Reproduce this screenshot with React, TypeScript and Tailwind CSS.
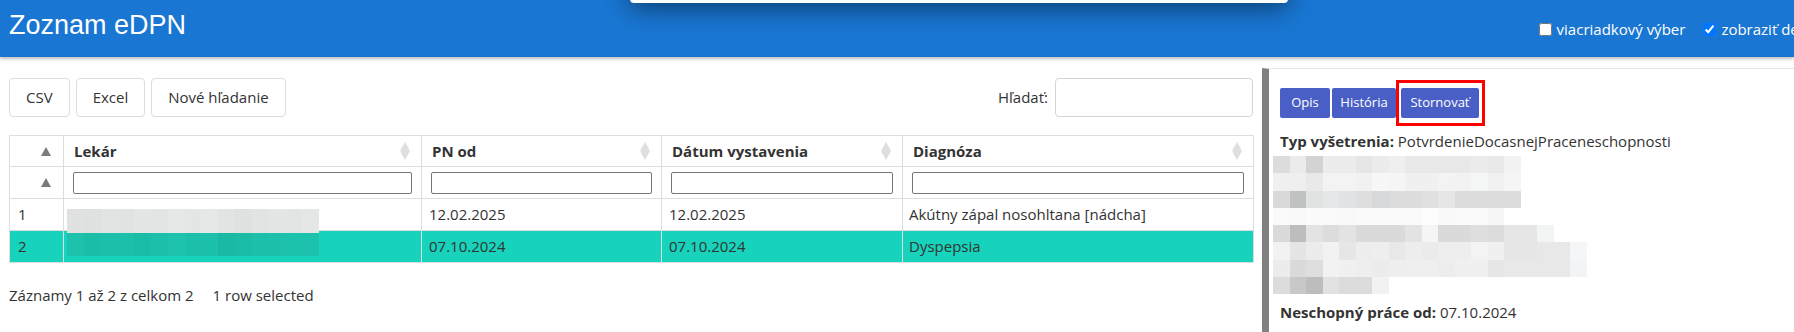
import React from "react";

const rightRows: { w: number; c: string[] }[] = [
  { w: 15, c: ["#dcdcdc","#ebebeb","#d3d3d3","#ececec","#ececec","#e6e6e6","#ececec","#efefef","#e8e8e8","#e8e8e8","#e8e8e8","#e8e8e8","#ececec","#e9e9e9","#f2f2f2"] },
  { w: 15, c: ["#f0f0f0","#efefef","#e8eaea","#f3f3f3","#f3f3f3","#f1f1f1","#f7f7f7","#f5f5f5","#f0f0f0","#f0f0f0","#f3f3f3","#f2f2f2","#f5f6f6","#f1f1f1","#f5f5f5"] },
  { w: 15, c: ["#d9d9d9","#c0c2c2","#e1e3e3","#e6e7e8","#e1e2e3","#dedede","#d8d9dc","#dcdcdc","#dcdcdc","#e0e0e0","#e6e6e6","#dcdcdc","#dcdcdc","#dcdcdc","#dcdcdc"] },
  { w: 14, c: ["#fafafa","#f9f9f9","#fbfbfb","#fafafa","#f9f9f9","#fafafa","#fafafa","#fbfbfb","#fafafa","#fdfdfd","#f9f9f9","#fafafa","#fafafa","#f7f7f7"] },
  { w: 17, c: ["#dadada","#bdbdbd","#e3e3e3","#dcdcdc","#e3e3e3","#dadada","#dadada","#dadada","#e3e3e3","#f5f5f5","#dadada","#dadada","#dedede","#dcdcdc","#e6e6e6","#e6e6e6","#f3f5f5"] },
  { w: 19, c: ["#f2f2f2","#e5e5e5","#ececec","#f2f2f2","#e6e6e6","#ededed","#eeeeee","#e8e8e8","#ededed","#ebebeb","#eeeeee","#eeeeee","#f3f3f3","#f0f0f0","#e6e6e6","#e6e6e6","#e8e8e8","#e8e8e8","#f5f6f7"] },
  { w: 19, c: ["#ececec","#dadada","#dedede","#f2f2f2","#f0f0f0","#eeeeee","#ececec","#eeeeee","#efefef","#efefef","#ededed","#f0f0f0","#f0f0f0","#e6e6e6","#e8e8e8","#e8e8e8","#e8e8e8","#e8e8e8","#f3f4f6"] },
  { w: 7, c: ["#dcdcdc","#c8c8c8","#bdbdbd","#e2e2e2","#dcdcdc","#dcdcdc","#f2f2f2"] },
];

const tableBlur1 = ["#e0e1e1","#dfe0e0","#e2e3e3","#e1e2e2","#e4e5e5","#e3e4e4","#e6e7e7","#e4e5e5","#e6e8e8","#e2e4e4","#dfe0e0","#e2e4e4","#e4e6e6","#e3e5e5","#e5e6e6"];
const tableBlur2 = ["#1dc2ac","#1bbda7","#1cbfa9","#1cbfa9","#1bbca6","#1cbfa9","#1dc3ad","#1cbfa9","#1dc1ab","#1ab9a4","#1bbca6","#1cbfa9","#1dc1ab","#1dc2ac","#1dc2ac"];

function SortBoth() {
  return (
    <svg width="10" height="18" viewBox="0 0 10 18" className="shrink-0">
      <path d="M5 0 L9.5 8 L9.5 10 L5 18 L0.5 10 L0.5 8 Z" fill="#dedede" />
    </svg>
  );
}

function HeadCell({ label }: { label: string }) {
  return (
    <th className="border border-[#dddddd] h-[31px] pl-[10px] pr-[11px] text-left align-middle">
      <div className="flex items-center justify-between">
        <span className="font-bold text-[15px] text-[#333333]">{label}</span>
        <SortBoth />
      </div>
    </th>
  );
}

function FilterCell() {
  return (
    <td className="border border-[#dddddd] h-[32px] px-[9px] align-middle">
      <div className="h-[22px] border border-[#767676] rounded-[2px] bg-white" />
    </td>
  );
}

function Tri() {
  return (
    <svg width="10" height="9" viewBox="0 0 10 9">
      <path d="M5 0 L10 9 L0 9 Z" fill="#7a7a7a" />
    </svg>
  );
}

export default function App() {
  return (
    <div className="relative w-[1794px] h-[332px] overflow-hidden bg-white font-['Open_Sans',sans-serif] text-[#333333]">
      {/* header */}
      <div className="relative h-[57px] bg-[#1976d2] shadow-[0_2px_3px_rgba(0,0,0,0.25)] flex items-center justify-between z-10">
        <div className="pl-[9px] pb-[6px] text-white text-[27px] font-['Liberation_Sans',Arial,sans-serif] leading-none">
          Zoznam eDPN
        </div>
        <div className="flex items-center whitespace-nowrap text-white text-[15px] mr-[-26px] pt-[1px]">
          <label className="flex items-center gap-[5px]">
            <input type="checkbox" className="w-[13px] h-[13px] m-0" readOnly />
            <span>viacriadkový výber</span>
          </label>
          <label className="flex items-center gap-[5px] ml-[18px]">
            <input type="checkbox" className="w-[13px] h-[13px] m-0" defaultChecked />
            <span>zobraziť detail</span>
          </label>
        </div>
        {/* popup at the top edge */}
        <div className="absolute left-[630px] top-[-40px] w-[658px] h-[43px] bg-white rounded-[4px] shadow-[0_6px_24px_rgba(0,0,0,0.45)]" />
      </div>

      <div className="flex">
        {/* left part */}
        <div className="w-[1262px] pl-[9px] pr-[9px] pt-[21px]">
          <div className="flex items-center justify-between">
            <div className="flex gap-[6px]">
              {["CSV", "Excel", "Nové hľadanie"].map((t) => (
                <button
                  key={t}
                  className="h-[39px] px-[16px] border border-[#dddddd] rounded-[4px] bg-white text-[15px] text-[#333333]"
                >
                  {t}
                </button>
              ))}
            </div>
            <div className="flex items-center gap-[7px]">
              <span className="text-[15px] text-[#333333]">Hľadať:</span>
              <div className="w-[198px] h-[39px] border border-[#d5d5d5] rounded-[4px]" />
            </div>
          </div>

          <table className="mt-[18px] w-[1244px] table-fixed border-collapse border border-[#dddddd] text-[15px]">
            <colgroup>
              <col className="w-[54px]" />
              <col className="w-[358px]" />
              <col className="w-[240px]" />
              <col className="w-[241px]" />
              <col className="w-[351px]" />
            </colgroup>
            <thead>
              <tr>
                <th className="border border-[#dddddd] h-[31px] pr-[12px] align-middle">
                  <div className="flex justify-end"><Tri /></div>
                </th>
                <HeadCell label="Lekár" />
                <HeadCell label="PN od" />
                <HeadCell label="Dátum vystavenia" />
                <HeadCell label="Diagnóza" />
              </tr>
              <tr>
                <td className="border border-[#dddddd] h-[32px] pr-[12px] align-middle">
                  <div className="flex justify-end"><Tri /></div>
                </td>
                <FilterCell />
                <FilterCell />
                <FilterCell />
                <FilterCell />
              </tr>
            </thead>
            <tbody>
              <tr className="bg-white">
                <td className="border border-[#dddddd] h-[32px] px-[8px]">1</td>
                <td className="border border-[#dddddd] h-[32px] p-0 relative">
                  <div className="absolute left-[3px] top-[10px] flex">
                    {tableBlur1.map((c, i) => (
                      <div key={i} className="w-[16.8px] h-[24px]" style={{ backgroundColor: c }} />
                    ))}
                  </div>
                </td>
                <td className="border border-[#dddddd] h-[32px] px-[7px]">12.02.2025</td>
                <td className="border border-[#dddddd] h-[32px] px-[7px]">12.02.2025</td>
                <td className="border border-[#dddddd] h-[32px] px-[6px]">Akútny zápal nosohltana [nádcha]</td>
              </tr>
              <tr className="bg-[#17d3bb]">
                <td className="border border-[#dddddd] h-[32px] px-[8px]">2</td>
                <td className="border border-[#dddddd] h-[32px] p-0 relative">
                  <div className="absolute left-[3px] top-[2px] flex">
                    {tableBlur2.map((c, i) => (
                      <div key={i} className="w-[16.8px] h-[23px]" style={{ backgroundColor: c }} />
                    ))}
                  </div>
                </td>
                <td className="border border-[#dddddd] h-[32px] px-[7px]">07.10.2024</td>
                <td className="border border-[#dddddd] h-[32px] px-[7px]">07.10.2024</td>
                <td className="border border-[#dddddd] h-[32px] px-[6px]">Dyspepsia</td>
              </tr>
            </tbody>
          </table>

          <div className="mt-[21px] text-[15px] text-[#333333] flex gap-[19px]">
            <span>Záznamy 1 až 2 z celkom 2</span>
            <span>1 row selected</span>
          </div>
        </div>

        {/* right panel */}
        <div className="flex-1 mt-[11px] h-[264px] border-l-[7px] border-[#808080] border-t border-t-[#e6e6e6] pl-[11px] pt-[19px] text-[15px] text-[#333333]">
          <div className="flex items-center">
            <button className="h-[30px] w-[50px] rounded-[2px] bg-[#4a5fc6] text-white text-[13px]">Opis</button>
            <button className="ml-[2px] h-[30px] w-[64px] rounded-[2px] bg-[#4a5fc6] text-white text-[13px]">História</button>
            <div className="relative ml-[5px]">
              <button className="h-[30px] w-[78px] rounded-[2px] bg-[#4a5fc6] text-white text-[13px]">Stornovať</button>
              <div className="absolute left-[-5px] top-[-8px] w-[89px] h-[46px] border-[3px] border-[#ff0000]" />
            </div>
          </div>
          <div className="mt-[13px] leading-[20px] whitespace-nowrap">
            <span className="font-bold">Typ vyšetrenia:</span> PotvrdenieDocasnejPraceneschopnosti
          </div>
          <div className="mt-[5px] ml-[-7px] flex flex-col">
            {rightRows.map((r, ri) => (
              <div key={ri} className="flex h-[17.3px]">
                {r.c.map((c, i) => (
                  <div key={i} className="w-[16.5px] h-full" style={{ backgroundColor: c }} />
                ))}
              </div>
            ))}
          </div>
          <div className="mt-[8px] leading-[20px] whitespace-nowrap">
            <span className="font-bold">Neschopný práce od:</span> 07.10.2024
          </div>
        </div>
      </div>
    </div>
  );
}
